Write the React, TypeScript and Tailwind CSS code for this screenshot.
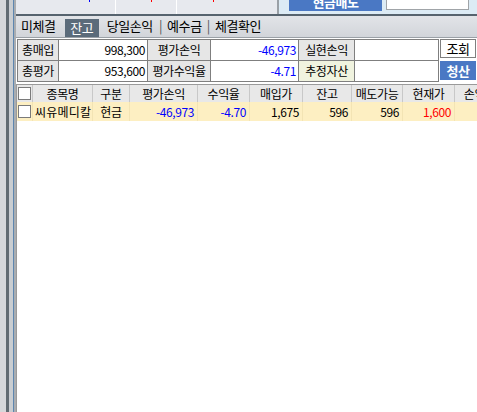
import React from 'react'

const font = { fontFamily: '"Noto Sans CJK KR", "Noto Sans", sans-serif' }

interface SummaryCell {
  label: string
  value: string
  valueClass?: string
  labelClass?: string
}

const summaryRows: SummaryCell[][] = [
  [
    { label: '총매입', value: '998,300' },
    { label: '평가손익', value: '-46,973', valueClass: 'text-[#0000ff]' },
    { label: '실현손익', value: '' },
  ],
  [
    { label: '총평가', value: '953,600' },
    { label: '평가수익율', value: '-4.71', valueClass: 'text-[#0000ff]' },
    { label: '추정자산', value: '', labelClass: 'bg-[#f0f3df]' },
  ],
]

const labelWidths = ['w-[41px]', 'w-[63px]', 'w-[56px]']
const valueWidths = ['w-[89px]', 'w-[88px]', 'w-[84px]']

interface GridColumn {
  title: string
  width: string
  value: string
  align: string
  color?: string
}

const columns: GridColumn[] = [
  { title: '종목명', width: 'w-[60px]', value: '씨유메디칼', align: 'justify-start pl-[2px] tracking-[0.2px]' },
  { title: '구분', width: 'w-[37px]', value: '현금', align: 'justify-center' },
  { title: '평가손익', width: 'w-[68px]', value: '-46,973', align: 'justify-end pr-[3px]', color: 'text-[#0000ff]' },
  { title: '수익율', width: 'w-[52px]', value: '-4.70', align: 'justify-end pr-[3px]', color: 'text-[#0000ff]' },
  { title: '매입가', width: 'w-[53px]', value: '1,675', align: 'justify-end pr-[3px]' },
  { title: '잔고', width: 'w-[49px]', value: '596', align: 'justify-end pr-[3px]' },
  { title: '매도가능', width: 'w-[51px]', value: '596', align: 'justify-end pr-[3px]' },
  { title: '현재가', width: 'w-[52px]', value: '1,600', align: 'justify-end pr-[3px]', color: 'text-[#ff0000]' },
  { title: '손익', width: 'w-[40px]', value: '', align: 'justify-start pl-[2px]' },
]

function CheckBox() {
  return <span className="block h-[13px] w-[13px] border border-[#7a7a7a] bg-white" />
}

export default function App() {
  return (
    <div className="flex h-[412px] w-[477px] overflow-hidden bg-white text-[12px] tracking-[-0.4px] text-black" style={font}>
      {/* left frame strips */}
      <div className="w-[6px] shrink-0 bg-[#d6d8da]" />
      <div className="w-[3px] shrink-0 bg-[#626c72]" />
      <div className="w-[4px] shrink-0 bg-[#c9cdd1]" />
      <div className="w-[1px] shrink-0 bg-[#5d86b0]" />
      <div className="w-[2px] shrink-0 bg-[#a9adb1]" />

      <div className="flex min-w-0 flex-1 flex-col">
        {/* clipped top panel */}
        <div className="flex h-[14px] shrink-0">
          <div className="flex w-[99px] justify-end bg-[#e7e9ee] pr-[25px]">
            <span className="h-[2px] w-[1px] bg-[#0000ff]" />
          </div>
          <div className="w-[1px] bg-white" />
          <div className="flex w-[60px] justify-end bg-[#e7e9ee] pr-[24px]">
            <span className="h-[2px] w-[1px] bg-[#ff0000]" />
          </div>
          <div className="w-[1px] bg-white" />
          <div className="flex w-[100px] justify-start bg-[#e7e9ee] pl-[36px]">
            <span className="h-[2px] w-[1px] bg-[#ff0000]" />
          </div>
          <div className="w-[2px] bg-[#9aa0a6]" />
          <div className="flex flex-1 items-start bg-[#dcebf5] pl-[10px]">
            <div className="h-[11px] w-[93px] overflow-hidden bg-[#4a78c4] text-center">
              <span className="-mt-[6px] block text-[13px] font-bold leading-[16px] text-white">현금매도</span>
            </div>
            <div className="ml-[4px] h-[10px] w-[83px] border-x border-b border-[#a0a4a8] bg-white" />
          </div>
        </div>
        <div className="h-[2px] shrink-0 bg-[#56636e]" />

        {/* tab bar */}
        <div className="flex h-[22px] shrink-0 items-end border-b border-[#9aa0a6] bg-gradient-to-b from-[#e2e4e8] to-[#d2d5da] pl-[5px] text-[13px]">
          <span className="mb-[2px] leading-[18px]">미체결</span>
          <span className="ml-[9px] flex h-[18px] w-[34px] items-center justify-center bg-[#5b6b7a] text-white">잔고</span>
          <span className="mb-[2px] ml-[8px] leading-[18px]">당일손익</span>
          <span className="mb-[2px] ml-[6px] leading-[18px] text-[#555]">|</span>
          <span className="mb-[2px] ml-[5px] leading-[18px]">예수금</span>
          <span className="mb-[2px] ml-[5px] leading-[18px] text-[#555]">|</span>
          <span className="mb-[2px] ml-[5px] leading-[18px]">체결확인</span>
        </div>

        {/* summary */}
        <div className="mt-[1px] flex pl-[1px]">
          <div className="flex flex-col border-l border-t border-[#7f7f7f]">
            {summaryRows.map((row, r) => (
              <div key={r} className="flex h-[21px]">
                {row.map((cell, c) => (
                  <React.Fragment key={cell.label}>
                    <div
                      className={`flex items-center justify-center border-b border-r border-[#7f7f7f] ${labelWidths[c]} ${cell.labelClass ?? 'bg-[#e6e6e6]'}`}
                    >
                      {cell.label}
                    </div>
                    <div
                      className={`flex items-center justify-end border-b border-r border-[#7f7f7f] bg-white pr-[2px] ${valueWidths[c]} ${cell.valueClass ?? ''}`}
                    >
                      {cell.value}
                    </div>
                  </React.Fragment>
                ))}
              </div>
            ))}
          </div>
          <div className="ml-[1px] flex flex-col">
            <button className="flex h-[19px] w-[36px] items-center justify-center border border-[#7f7f7f] bg-white text-[13px]">
              조회
            </button>
            <button className="mt-[3px] flex h-[19px] w-[36px] items-center justify-center bg-[#4a78c4] text-[13px] font-bold text-white">
              청산
            </button>
          </div>
        </div>

        {/* grid */}
        <div className="mt-[2px] flex flex-1 flex-col border-l border-t border-[#9a9a9a] bg-white">
          <div className="flex h-[17px] shrink-0 bg-[#e8e8e8]">
            <div className="flex w-[16px] shrink-0 items-center justify-center border-r border-[#c8c8c8]">
              <CheckBox />
            </div>
            {columns.map(col => (
              <div
                key={col.title}
                className={`flex shrink-0 items-center justify-center overflow-hidden whitespace-nowrap border-r border-[#c8c8c8] ${col.width}`}
              >
                {col.title}
              </div>
            ))}
          </div>
          <div className="flex h-[19px] shrink-0 bg-[#fdefc2]">
            <div className="flex w-[16px] shrink-0 items-center justify-center border-r border-[#f3e4b4]">
              <CheckBox />
            </div>
            {columns.map(col => (
              <div
                key={col.title}
                className={`flex shrink-0 items-center overflow-hidden whitespace-nowrap border-r border-[#f3e4b4] ${col.width} ${col.align} ${col.color ?? ''}`}
              >
                {col.value}
              </div>
            ))}
          </div>
        </div>
      </div>
    </div>
  )
}
